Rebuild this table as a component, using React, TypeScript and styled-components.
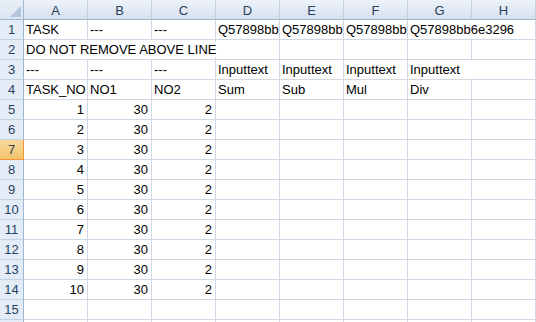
import { Fragment } from "react";
import styled, { createGlobalStyle } from "styled-components";

const GlobalStyle = createGlobalStyle`
    html, body {
        margin: 0;
        padding: 0;
        background: #ffffff;
        overflow: hidden;
    }
`;

const Sheet = styled.div`
    display: grid;
    grid-template-columns: 24px repeat(8, 64px);
    grid-auto-rows: 20px;
    width: 536px;
    height: 322px;
    overflow: hidden;
    font-family: "Liberation Sans", Arial, sans-serif;
    font-size: 13px;
    color: #000;
`;

const Corner = styled.div`
    position: relative;
    background: linear-gradient(#e9eff8, #dbe5f1);
    border-right: 1px solid #9eb6ce;
    border-bottom: 1px solid #9eb6ce;
    box-sizing: border-box;
    &::after {
        content: "";
        position: absolute;
        right: 2px;
        bottom: 2px;
        width: 0;
        height: 0;
        border-left: 11px solid transparent;
        border-bottom: 11px solid #b4c6db;
    }
`;

const ColHead = styled.div`
    display: flex;
    align-items: center;
    justify-content: center;
    background: linear-gradient(#eef3fa 0%, #e2e9f4 50%, #d6e0ee 100%);
    border-right: 1px solid #c3d0e0;
    border-bottom: 1px solid #9eb6ce;
    box-sizing: border-box;
    color: #27415f;
    padding-top: 1px;
`;

const RowHead = styled.div<{ $active?: boolean }>`
    display: flex;
    align-items: flex-end;
    justify-content: center;
    padding-bottom: 2px;
    background: ${p => p.$active ? "linear-gradient(#f9d99f, #f2c36a)" : "#e4ecf7"};
    border-right: 1px solid ${p => p.$active ? "#f29536" : "#9eb6ce"};
    border-bottom: 1px solid ${p => p.$active ? "#f29536" : "#c5d2e3"};
    box-sizing: border-box;
    color: #27415f;
`;

const Cell = styled.div<{ $num?: boolean; $spill?: boolean }>`
    display: flex;
    align-items: flex-end;
    justify-content: ${p => p.$num ? "flex-end" : "flex-start"};
    padding: 0 ${p => p.$num ? "3px" : "0"} 2px ${p => p.$num ? "0" : "2px"};
    border-right: 1px solid ${p => p.$spill ? "transparent" : "#d0d7e5"};
    border-bottom: 1px solid #d0d7e5;
    box-sizing: border-box;
    white-space: nowrap;
    overflow: visible;
    position: relative;
    min-width: 0;
`;

const Spill = styled.span`
    position: relative;
    z-index: 1;
    background: #fff;
    padding-right: 1px;
`;

const cols = ["A", "B", "C", "D", "E", "F", "G", "H"];

type Row = (string | number | null)[];

const empty: Row = [null, null, null, null, null, null, null, null];

const top: Row[] = [
    ["TASK", "---", "---", "Q57898bb", "Q57898bb", "Q57898bb", "Q57898bb6e3296", null],
    ["DO NOT REMOVE ABOVE LINE", null, null, null, null, null, null, null],
    ["---", "---", "---", "Inputtext", "Inputtext", "Inputtext", "Inputtext", null],
    ["TASK_NO", "NO1", "NO2", "Sum", "Sub", "Mul", "Div", null],
];

const rows: Row[] = [
    ...top,
    ...Array.from({ length: 10 }, (_, i) => [i + 1, 30, 2, null, null, null, null, null] as Row),
    empty,
    empty,
];

// long text spills into empty neighbours, so no border under it
function hidesBorder(row: Row, c: number) {
    for (let k = c; k >= 0; k--) {
        const v = row[k];
        if (v !== null) {
            if (k === c) return false;
            return typeof v === "string" && v.length * 7.5 > (c - k) * 64;
        }
    }
    return false;
}

function App() {
    return (
        <>
            <GlobalStyle />
            <Sheet>
                <Corner />
                {cols.map(c => <ColHead key={c}>{c}</ColHead>)}
                {rows.map((row, r) => (
                    <Fragment key={r}>
                        {/* last row is cut by the window, only its top shows */}
                        <RowHead $active={r === 6}>{r < 15 ? r + 1 : ""}</RowHead>
                        {row.map((v, c) => (
                            <Cell
                                key={c}
                                $num={typeof v === "number"}
                                $spill={c + 1 < row.length && hidesBorder(row, c + 1)}
                            >
                                {typeof v === "string" && v.length > 8 ? <Spill>{v}</Spill> : v}
                            </Cell>
                        ))}
                    </Fragment>
                ))}
            </Sheet>
        </>
    );
}

export default App;
